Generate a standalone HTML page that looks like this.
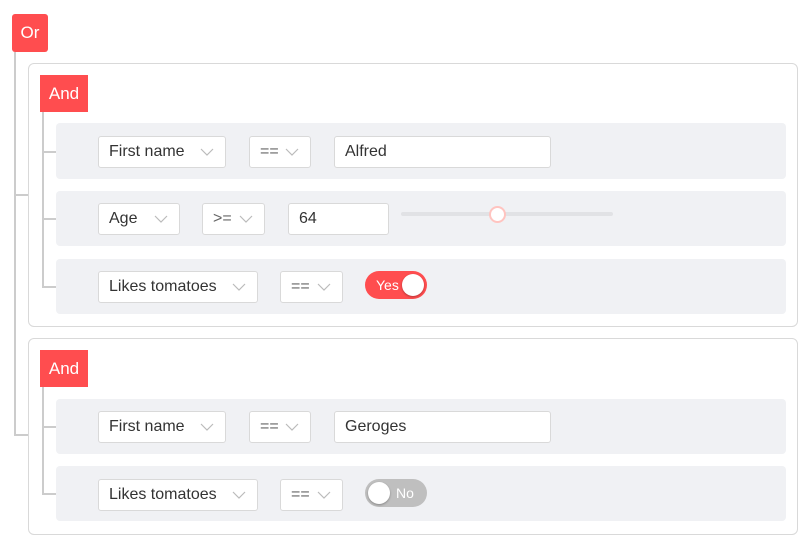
<!DOCTYPE html>
<html><head><style>
*{box-sizing:border-box;margin:0;padding:0}
body{width:810px;height:546px;background:#fff;font-family:"Liberation Sans",sans-serif;position:relative;overflow:hidden;color:#333}
.a{position:absolute}
.btn{position:absolute;background:#ff4d4f;color:#fff;font-size:17px;display:flex;align-items:center;justify-content:center}
.ln{position:absolute;background:#ccc}
.grp{position:absolute;left:28px;width:770px;border:1px solid #d9d9d9;border-radius:6px}
.row{position:absolute;left:56px;width:730px;background:#f0f1f4;border-radius:4px}
.sel,.inp{position:absolute;background:#fff;border:1px solid #d9d9d9;border-radius:3px;height:32px;font-size:16px;display:flex;align-items:center;padding-left:10px}
.sel svg{position:absolute;right:11px;top:10px}
.tg{position:absolute;width:62px;height:28px;border-radius:14px;color:#fff;font-size:14px;display:flex;align-items:center}
.kn{position:absolute;top:3px;width:22px;height:22px;border-radius:50%;background:#fff;box-shadow:0 1px 2px rgba(0,0,0,.3)}
</style></head><body>
<div class="btn" style="left:12px;top:14px;width:36px;height:38px;border-radius:3px">Or</div>
<div class="ln" style="left:14px;top:52px;width:2px;height:384px"></div>
<div class="ln" style="left:14px;top:194px;width:14px;height:2px"></div>
<div class="ln" style="left:14px;top:434px;width:14px;height:2px"></div>

<div class="grp" style="top:63px;height:264px"></div>
<div class="btn" style="left:40px;top:75px;width:48px;height:37px">And</div>
<div class="ln" style="left:42px;top:112px;width:2px;height:176px"></div>
<div class="ln" style="left:42px;top:151px;width:14px;height:2px"></div>
<div class="ln" style="left:42px;top:218px;width:14px;height:2px"></div>
<div class="ln" style="left:42px;top:286px;width:14px;height:2px"></div>

<div class="row" style="top:123px;height:56px"></div>
<div class="row" style="top:191px;height:55px"></div>
<div class="row" style="top:259px;height:55px"></div>

<div class="grp" style="top:338px;height:197px"></div>
<div class="btn" style="left:40px;top:350px;width:48px;height:37px">And</div>
<div class="ln" style="left:42px;top:387px;width:2px;height:108px"></div>
<div class="ln" style="left:42px;top:426px;width:14px;height:2px"></div>
<div class="ln" style="left:42px;top:493px;width:14px;height:2px"></div>
<div class="row" style="top:399px;height:55px"></div>
<div class="row" style="top:466px;height:55px"></div>

<div class="sel" style="left:98px;top:136px;width:128px">First name<svg width="14" height="10"><path d="M1 2l6 6 6-6" fill="none" stroke="#bbb" stroke-width="1.2"/></svg></div>
<div class="sel" style="left:249px;top:136px;width:62px;color:#666">==<svg width="14" height="10"><path d="M1 2l6 6 6-6" fill="none" stroke="#bbb" stroke-width="1.2"/></svg></div>
<div class="inp" style="left:334px;top:136px;width:217px">Alfred</div>

<div class="sel" style="left:98px;top:203px;width:82px">Age<svg width="14" height="10"><path d="M1 2l6 6 6-6" fill="none" stroke="#bbb" stroke-width="1.2"/></svg></div>
<div class="sel" style="left:202px;top:203px;width:63px;color:#666">&gt;=<svg width="14" height="10"><path d="M1 2l6 6 6-6" fill="none" stroke="#bbb" stroke-width="1.2"/></svg></div>
<div class="inp" style="left:288px;top:203px;width:101px">64</div>
<div class="a" style="left:401px;top:212px;width:212px;height:4px;border-radius:2px;background:#e1e2e5"></div>
<div class="a" style="left:489px;top:206px;width:17px;height:17px;border-radius:50%;background:#fff;border:2px solid #ffc4c0"></div>

<div class="sel" style="left:98px;top:271px;width:160px">Likes tomatoes<svg width="14" height="10"><path d="M1 2l6 6 6-6" fill="none" stroke="#bbb" stroke-width="1.2"/></svg></div>
<div class="sel" style="left:280px;top:271px;width:63px;color:#666">==<svg width="14" height="10"><path d="M1 2l6 6 6-6" fill="none" stroke="#bbb" stroke-width="1.2"/></svg></div>
<div class="tg" style="left:365px;top:271px;background:#ff4d4f;padding-left:11px">Yes<div class="kn" style="left:37px"></div></div>

<div class="sel" style="left:98px;top:411px;width:128px">First name<svg width="14" height="10"><path d="M1 2l6 6 6-6" fill="none" stroke="#bbb" stroke-width="1.2"/></svg></div>
<div class="sel" style="left:249px;top:411px;width:62px;color:#666">==<svg width="14" height="10"><path d="M1 2l6 6 6-6" fill="none" stroke="#bbb" stroke-width="1.2"/></svg></div>
<div class="inp" style="left:334px;top:411px;width:217px">Geroges</div>
<div class="sel" style="left:98px;top:479px;width:160px">Likes tomatoes<svg width="14" height="10"><path d="M1 2l6 6 6-6" fill="none" stroke="#bbb" stroke-width="1.2"/></svg></div>
<div class="sel" style="left:280px;top:479px;width:63px;color:#666">==<svg width="14" height="10"><path d="M1 2l6 6 6-6" fill="none" stroke="#bbb" stroke-width="1.2"/></svg></div>
<div class="tg" style="left:365px;top:479px;background:#bfbfbf;padding-left:31px">No<div class="kn" style="left:3px"></div></div>
</body></html>
